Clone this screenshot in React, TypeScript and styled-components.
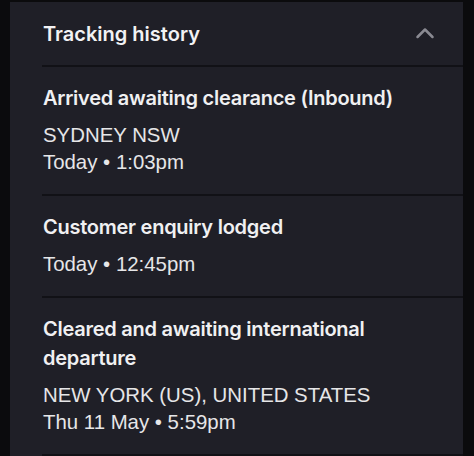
import React from "react";
import styled, { createGlobalStyle } from "styled-components";

const Global = createGlobalStyle`
  html, body { margin: 0; padding: 0; background: #0b0b0d; }
  body { font-family: Inter, "Noto Sans", sans-serif; -webkit-font-smoothing: antialiased; }
`;

const Page = styled.div`
  width: 474px;
  height: 456px;
  overflow: hidden;
  padding: 2px 11px 0 10px;
  box-sizing: border-box;
`;

const Panel = styled.section`
  background: #1f1f27;
  height: 100%;
  padding-left: 32px;
`;

const Header = styled.div`
  display: flex;
  align-items: center;
  justify-content: space-between;
  height: 63px;
  padding: 0 28px 0 1px;
  border-bottom: 2px solid #111116;
`;

const Title = styled.h2`
  margin: 0;
  font-size: 20px;
  font-weight: 600;
  color: #f2f2f4;
  letter-spacing: 0;
`;

const Chevron = styled.svg`
  width: 20px;
  height: 20px;
  margin-top: -2px;
  color: #8a8a92;
`;

const Event = styled.div`
  padding: 17px 20px 18px 1px;
  border-bottom: 2px solid #111116;
`;

const Heading = styled.div`
  font-size: 20px;
  font-weight: 600;
  line-height: 29px;
  color: #f0f0f2;
  letter-spacing: -0.25px;
  margin-bottom: 9px;
`;

const Detail = styled.div`
  font-family: "Liberation Sans", Arial, sans-serif;
  font-size: 20.4px;
  font-weight: 400;
  line-height: 27px;
  color: #e6e6e8;
`;

type Item = { title: string; lines: string[] };

const items: Item[] = [
  { title: "Arrived awaiting clearance (Inbound)", lines: ["SYDNEY NSW", "Today • 1:03pm"] },
  { title: "Customer enquiry lodged", lines: ["Today • 12:45pm"] },
  {
    title: "Cleared and awaiting international departure",
    lines: ["NEW YORK (US), UNITED STATES", "Thu 11 May • 5:59pm"],
  },
];

export default function App() {
  return (
    <>
      <Global />
      <Page>
        <Panel>
          <Header>
            <Title>Tracking history</Title>
            <Chevron viewBox="0 0 20 20" fill="none" stroke="currentColor" strokeWidth={2.5} strokeLinecap="round" strokeLinejoin="round">
              <path d="M2.5 14L10 6.5 17.5 14" />
            </Chevron>
          </Header>
          {items.map((it) => (
            <Event key={it.title}>
              <Heading>{it.title}</Heading>
              {it.lines.map((l) => (
                <Detail key={l}>{l}</Detail>
              ))}
            </Event>
          ))}
        </Panel>
      </Page>
    </>
  );
}
